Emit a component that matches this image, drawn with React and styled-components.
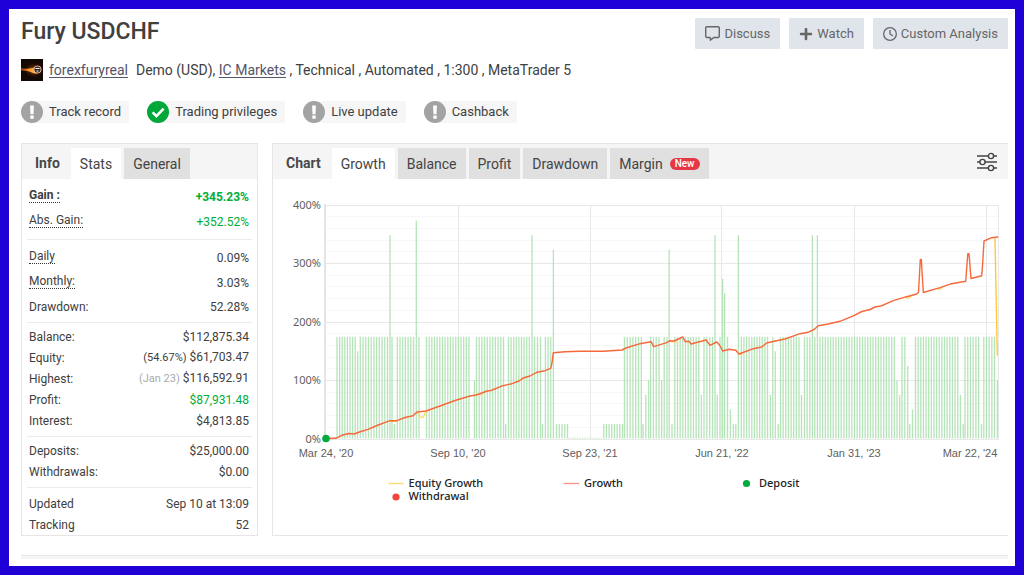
import React from "react";
import styled, { createGlobalStyle } from "styled-components";
import { FaRegClock, FaRegMessage } from "react-icons/fa6";
import { FaPlus } from "react-icons/fa";

const Global = createGlobalStyle`
  *, *::before, *::after { box-sizing: border-box; }
  body { margin: 0; background: #fff; }
  body, button { font-family: Roboto, "Liberation Sans", sans-serif; }
`;

const Page = styled.main`
  min-height: 100vh;
  border: 9px solid #1e00d7;
  padding: 9px 7px 7px 12px;
  color: #404040;
  background: #fff;
`;

const Header = styled.header`
  display: flex;
  justify-content: space-between;
  align-items: center;
  height: 31px;
`;

const Title = styled.h1`
  margin: 0;
  padding-bottom: 4px;
  font-size: 23px;
  line-height: 26px;
  font-weight: 500;
`;

const Actions = styled.div`
  display: flex;
  gap: 9px;
`;

const ActionButton = styled.button`
  display: flex;
  align-items: center;
  gap: 4px;
  height: 31px;
  padding: 0 10px;
  border: 0;
  border-radius: 1px;
  background: #e0e4eb;
  color: #666;
  font-size: 13px;
  line-height: 20px;
`;

const Meta = styled.div`
  display: flex;
  align-items: center;
  margin-top: 10px;
  height: 22px;
  font-size: 14px;
  line-height: 22px;
`;

const Avatar = styled.svg`
  width: 22px;
  height: 22px;
  margin-right: 6px;
`;

const Details = styled.span`
  margin-left: 8px;
`;

const TextLink = styled.a`
  color: #55556a;
  text-decoration: underline;
  text-underline-offset: 2px;
`;

const Chips = styled.ul`
  display: flex;
  gap: 18px;
  margin: 20px 0;
  padding: 0;
  list-style: none;
`;

const Chip = styled.li`
  display: flex;
  align-items: center;
  gap: 6px;
  height: 22px;
  padding-right: 8px;
  border-radius: 11px 2px 2px 11px;
  background: #f6f6f6;
  font-size: 13px;
  line-height: 22px;
  svg { width: 22px; height: 22px; }
`;

const Panels = styled.div`
  display: grid;
  grid-template-columns: 237px minmax(0, 1fr);
  gap: 14px;
`;

const Panel = styled.section`
  border: 1px solid #e6e6e6;
  border-right-width: ${(p) => (p.$open ? 0 : "1px")};
`;

const TabBar = styled.div`
  display: flex;
  align-items: flex-end;
  height: 35px;
  padding-left: 13px;
  background: #f5f5f5;
`;

const PanelTitle = styled.h2`
  margin: 0 11px 0 0;
  font-size: 14px;
  line-height: 31px;
  font-weight: 700;
  color: #484848;
`;

const Tabs = styled.div`
  display: flex;
  gap: 3px;
`;

const Tab = styled.button`
  display: flex;
  align-items: center;
  gap: 7px;
  height: 31px;
  padding: 0 9px;
  border: 0;
  background: ${(p) => (p.$active ? "#fff" : "#e0e0e0")};
  color: #444;
  font-size: 14px;
`;

const Badge = styled.span`
  padding: 0 5px;
  border-radius: 6px;
  background: #e63745;
  color: #fff;
  font-size: 10px;
  line-height: 12px;
  font-weight: 500;
`;

const SettingsButton = styled.button`
  display: flex;
  margin: 0 11px 7px auto;
  padding: 0;
  border: 0;
  background: none;
  svg { width: 20px; height: 20px; }
`;

const Group = styled.dl`
  margin: 0 5px;
  padding: ${(p) => p.$pad};
  border-top: ${(p) => (p.$first ? 0 : "1px solid #ebebeb")};
`;

const Row = styled.div`
  display: flex;
  justify-content: space-between;
  align-items: center;
  height: ${(p) => (p.$tall ? 25 : 21)}px;
  padding: 0 3px 0 2px;
  font-size: 12px;
  line-height: 16px;
  font-weight: ${(p) => (p.$bold ? 700 : 400)};
`;

const Term = styled.dt`
  border-bottom: ${(p) => (p.$tip ? "1px dotted #333" : 0)};
  line-height: ${(p) => (p.$tip ? 14 : 16)}px;
`;

const Value = styled.dd`
  margin: 0;
  padding-top: ${(p) => (p.$tip ? 3 : 0)}px;
  color: ${(p) => (p.$green ? "#00ad39" : "inherit")};
`;

const Note = styled.small`
  font-size: 11px;
  color: ${(p) => (p.$muted ? "#aaa" : "inherit")};
`;

const ChartSvg = styled.svg`
  display: block;
  width: 100%;
  height: auto;
`;

const AxisText = styled.text`
  font-family: ${(p) => (p.$date ? '"Liberation Sans"' : '"Noto Sans"')}, sans-serif;
  font-size: 11px;
  fill: #606060;
`;

const LegendText = styled.text`
  font-family: "Noto Sans", sans-serif;
  font-size: 11px;
  font-weight: 500;
  fill: #222;
`;

const NextPanel = styled.div`
  height: 4px;
  margin-top: 19px;
  border-top: 1px solid #e8e8e8;
  background: #f5f5f5;
`;

const groups = [
  { pad: "4px 0 6px", tall: true, rows: [
    { label: "Gain :", value: "+345.23%", tip: true, green: true, bold: true },
    { label: "Abs. Gain:", value: "+352.52%", tip: true, green: true },
  ] },
  { pad: "4px 0 3px", tall: true, rows: [
    { label: "Daily", value: "0.09%", tip: true },
    { label: "Monthly:", value: "3.03%", tip: true },
    { label: "Drawdown:", value: "52.28%" },
  ] },
  { pad: "3px 0 5px", rows: [
    { label: "Balance:", value: "$112,875.34" },
    { label: "Equity:", value: "$61,703.47", note: "(54.67%)" },
    { label: "Highest:", value: "$116,592.91", note: "(Jan 23)", muted: true },
    { label: "Profit:", value: "$87,931.48", green: true },
    { label: "Interest:", value: "$4,813.85" },
  ] },
  { pad: "3px 0 5px", rows: [
    { label: "Deposits:", value: "$25,000.00" },
    { label: "Withdrawals:", value: "$0.00" },
  ] },
  { pad: "5px 0 0", rows: [
    { label: "Updated", value: "Sep 10 at 13:09" },
    { label: "Tracking", value: "52" },
  ] },
];

function StatusIcon({ ok }) {
  return (
    <svg viewBox="0 0 22 22" aria-hidden="true">
      <circle cx="11" cy="11" r="11" fill={ok ? "#00a83a" : "#a3a3a3"} />
      {ok ? (
        <path d="M5.6 11.4l3.8 3.7 7.2-7.4" fill="none" stroke="#fff" strokeWidth="2.6" />
      ) : (
        <path d="M9.1 4.4h3.8l-.4 8.8h-3zM9.3 14.5h3.4v3.2H9.3z" fill="#fff" />
      )}
    </svg>
  );
}

function AvatarPicture() {
  return (
    <Avatar viewBox="0 0 22 22" role="img" aria-label="forexfuryreal">
      <defs>
        <linearGradient id="flame" x1="0" x2="1">
          <stop offset="0" stopColor="#8c2a06" />
          <stop offset=".4" stopColor="#ff9a28" />
          <stop offset=".75" stopColor="#ffb860" />
          <stop offset="1" stopColor="#d8661a" />
        </linearGradient>
        <radialGradient id="glow">
          <stop offset="0" stopColor="#d65a10" />
          <stop offset="1" stopColor="#1a0903" stopOpacity="0" />
        </radialGradient>
      </defs>
      <rect width="22" height="22" fill="#140905" />
      <ellipse cx="13" cy="11" rx="11" ry="8" fill="url(#glow)" />
      <path d="M0 9c4 1.500 8 .5 12 0 3-1 6-.5 8 2-1 3-5 4.500-8 3C8 11.500 4 12 0 11.500z" fill="url(#flame)" />
      <circle cx="16.500" cy="10.500" r="3.600" fill="#2c2430" stroke="#e7b98c" strokeWidth="1" />
      <path d="M14.500 9.500h4M15.500 12h2" stroke="#fff" strokeWidth="1" />
    </Avatar>
  );
}

const LEFT = 325;
const RIGHT = 999;
const ZERO = 438.5;
const yOf = (pct) => ZERO - pct * 0.585;
const barHeight = (pct) => pct * 0.581;

// Runs of deposits: first x, last x, height in percent.
const runs = [
  [337, 355.2, 175], [357.6, 357.6, 150], [360.3, 387.5, 175], [390, 390, 350], [392, 392, 175],
  [394.5, 394.5, 25], [397.3, 413.5, 175], [416.300, 416.300, 375], [419, 419, 175],
  [426.5, 469, 175], [474.4, 474.4, 100], [476.500, 503.500, 175], [505.600, 505.600, 25],
  [508.500, 529.300, 175], [532, 532, 350], [534.500, 540.500, 175], [542.500, 542.500, 25],
  [545.4, 550.7, 175], [553.4, 553.4, 325], [556.5, 567.5, 25], [569.500, 601, 1.500], [603.700, 622.500, 25],
  [624.500, 641.300, 175], [643, 643, 25], [645.800, 645.800, 75], [648.700, 648.700, 100],
  [650.600, 659, 175], [661.600, 661.600, 100], [664.200, 667, 175], [669.200, 669.200, 325],
  [672, 672, 25], [674.800, 698.800, 175], [701.400, 701.400, 75], [704, 712.500, 175],
  [715, 715, 350], [717.200, 717.200, 75], [720, 720, 175], [722.600, 722.600, 275],
  [724.600, 724.600, 250], [727.500, 727.500, 175], [730.400, 730.400, 50], [733.400, 735.800, 25],
  [738.400, 738.400, 350], [741.300, 767.500, 175], [770.400, 770.400, 75], [772.800, 772.800, 175],
  [775.300, 775.300, 150], [778.200, 778.200, 25], [780.500, 799, 175], [801.500, 801.500, 75],
  [804.500, 809.800, 175], [812.400, 812.400, 350], [814.800, 814.800, 175], [817.400, 817.400, 350],
  [820, 894.300, 175], [897, 897, 100], [899.700, 899.700, 75], [902, 904.800, 175],
  [907.700, 907.700, 125], [909.800, 909.800, 25], [912.500, 912.500, 50], [915.500, 957.700, 175],
  [960.400, 960.400, 75], [963.200, 963.200, 25], [965, 978.600, 175], [981.500, 981.500, 25],
  [983.800, 994.500, 175], [997.400, 997.400, 100],
];

const bars = runs.flatMap(([from, to, value]) => {
  const steps = Math.round((to - from) / 2.63);
  return Array.from({ length: steps + 1 }, (_, i) => ({
    x: steps ? from + ((to - from) * i) / steps : from,
    value,
  }));
});

const growth =
  "325,438.5 336,438.3 341.700,435.300 349,433.500 354,434 361,431.500 368,429.300 377,425.500 390,420.700 397,420.700 405,417.500 413,415.700 417,412 426,411 440,406 455,400.500 470,396 476,395 482,393 487,391 491,390.500 503,385.700 512,383.700 519,381 523,378 530,376 536.700,372.300 545,370.700 550.700,368.300 552,363 553.300,352.700 565,351.700 580,351.300 603,351.300 622,350 626,348 640,343.700 651,341.700 653.700,346.700 666.700,342.700 670,340.700 674,341 682.700,337 685.300,341.700 689,341.300 691,344 706,340 710,345.300 716.700,342 719.500,345 722.700,351 729.300,349.300 735.700,350.300 739,354 753.300,348.700 761.700,347 766.700,343 773,341.500 785,339 800,333.700 808,332.300 814,329.500 818.300,325.700 828.300,324 840,321.300 854.300,315.300 862,311.500 870,309.500 875,307 881,306 893.300,300.700 906.700,296.700 916.700,294 918.500,292.300 920.300,259.500 921.300,259.500 923.300,292.500 940,287.700 951.700,283.700 965.700,281.300 967.800,253.700 969,253.700 971,278.500 981.700,275.700 982.700,263 984,241 991.700,237.700 997.700,237";

const dates = [
  [326, "Mar 24, '20"], [458, "Sep 10, '20"], [590, "Sep 23, '21"],
  [722, "Jun 21, '22"], [854, "Jan 31, '23"], [970, "Mar 22, '24"],
];

function GrowthChart() {
  return (
    <ChartSvg viewBox="273 179 735 352" role="img" aria-label="Growth chart">
      {Array.from({ length: 21 }, (_, i) => (
        <line key={i} x1={LEFT} x2={RIGHT} y1={Math.round(yOf(i * 20)) + 0.5} y2={Math.round(yOf(i * 20)) + 0.5}
          stroke={i % 5 ? "#f7f7f7" : "#e8e8e8"} />
      ))}
      {[458, 590, 721, 854, 986, 998].map((x) => (
        <line key={x} x1={x + 0.5} x2={x + 0.5} y1="205" y2="439" stroke="#e8e8e8" />
      ))}
      <line x1="325" x2="325" y1="204" y2="439" stroke="#e4e4e4" strokeWidth="2" />
      {bars.map((b, i) => (
        <rect key={i} x={b.x - 0.65} y={ZERO - barHeight(b.value)} width="1.3" height={barHeight(b.value)} fill="#a9dfad" fillOpacity=".85" />
      ))}
      <g fill="none" strokeLinejoin="round" strokeLinecap="round">
        <path d="M390 421.500h7M417 413l2 1c1.500 5 4.500 5 6-1l2-2M478 395h4M520 380.500l5-3M672 342h5M738 354.500h4M905 297l3 1.500 3-2M937 288.500l3 1 2-2" stroke="#fdd95c" strokeWidth="1.2" />
        <path d="M995 238.500l2.300 116.500" stroke="#fdc93f" strokeWidth="1.4" />
        <polyline points={growth} stroke="#f5693c" strokeWidth="1.4" />
      </g>
      <circle cx="326" cy="438.5" r="3.800" fill="#00aa3c" />
      {[400, 300, 200, 100, 0].map((v) => (
        <AxisText key={v} x="321" y={yOf(v) + 4} textAnchor="end">{v}%</AxisText>
      ))}
      {dates.map(([x, label]) => (
        <AxisText key={label} $date x={x} y="457" textAnchor="middle">{label}</AxisText>
      ))}
      <path d="M388.500 483.500h15" stroke="#fddb74" strokeWidth="1.4" />
      <LegendText x="408.500" y="487">Equity Growth</LegendText>
      <circle cx="396" cy="497" r="3.600" fill="#f2453c" />
      <LegendText x="408.500" y="500">Withdrawal</LegendText>
      <path d="M563.500 483.500h15.500" stroke="#f69a90" strokeWidth="1.4" />
      <LegendText x="584" y="487">Growth</LegendText>
      <circle cx="746.500" cy="483.500" r="3.600" fill="#00aa3c" />
      <LegendText x="759" y="487">Deposit</LegendText>
    </ChartSvg>
  );
}

export default function App() {
  return (
    <Page>
      <Global />
      <Header>
        <Title>Fury USDCHF</Title>
        <Actions>
          <ActionButton type="button"><FaRegMessage size={15} />Discuss</ActionButton>
          <ActionButton type="button"><FaPlus size={14} />Watch</ActionButton>
          <ActionButton type="button"><FaRegClock size={14} />Custom Analysis</ActionButton>
        </Actions>
      </Header>
      <Meta>
        <AvatarPicture />
        <TextLink href="#profile">forexfuryreal</TextLink>
        <Details>
          Demo (USD), <TextLink href="#broker">IC Markets</TextLink> , Technical , Automated , 1:300 , MetaTrader 5
        </Details>
      </Meta>
      <Chips>
        <Chip><StatusIcon />Track record</Chip>
        <Chip><StatusIcon ok />Trading privileges</Chip>
        <Chip><StatusIcon />Live update</Chip>
        <Chip><StatusIcon />Cashback</Chip>
      </Chips>
      <Panels>
        <Panel>
          <TabBar>
            <PanelTitle>Info</PanelTitle>
            <Tabs role="tablist">
              <Tab type="button" role="tab" aria-selected="true" $active>Stats</Tab>
              <Tab type="button" role="tab" aria-selected="false">General</Tab>
            </Tabs>
          </TabBar>
          {groups.map((g, i) => (
            <Group key={i} $pad={g.pad} $first={i === 0}>
              {g.rows.map((r) => (
                <Row key={r.label} $tall={g.tall} $bold={r.bold}>
                  <Term $tip={r.tip}>{r.label}</Term>
                  <Value $tip={r.tip} $green={r.green}>
                    {r.note && <><Note $muted={r.muted}>{r.note}</Note> </>}
                    {r.value}
                  </Value>
                </Row>
              ))}
            </Group>
          ))}
        </Panel>
        <Panel $open>
          <TabBar>
            <PanelTitle>Chart</PanelTitle>
            <Tabs role="tablist">
              <Tab type="button" role="tab" aria-selected="true" $active>Growth</Tab>
              <Tab type="button" role="tab" aria-selected="false">Balance</Tab>
              <Tab type="button" role="tab" aria-selected="false">Profit</Tab>
              <Tab type="button" role="tab" aria-selected="false">Drawdown</Tab>
              <Tab type="button" role="tab" aria-selected="false">Margin <Badge>New</Badge></Tab>
            </Tabs>
            <SettingsButton type="button" aria-label="Chart settings">
              <svg viewBox="0 0 20 20" fill="none" stroke="#444" strokeWidth="1.400">
                <path d="M0 4h11.500M16.500 4H20M0 10h3M8 10h12M0 16h11.500M16.500 16H20" />
                <circle cx="14" cy="4" r="2.600" />
                <circle cx="5.500" cy="10" r="2.600" />
                <circle cx="14" cy="16" r="2.600" />
              </svg>
            </SettingsButton>
          </TabBar>
          <GrowthChart />
        </Panel>
      </Panels>
      <NextPanel />
    </Page>
  );
}
